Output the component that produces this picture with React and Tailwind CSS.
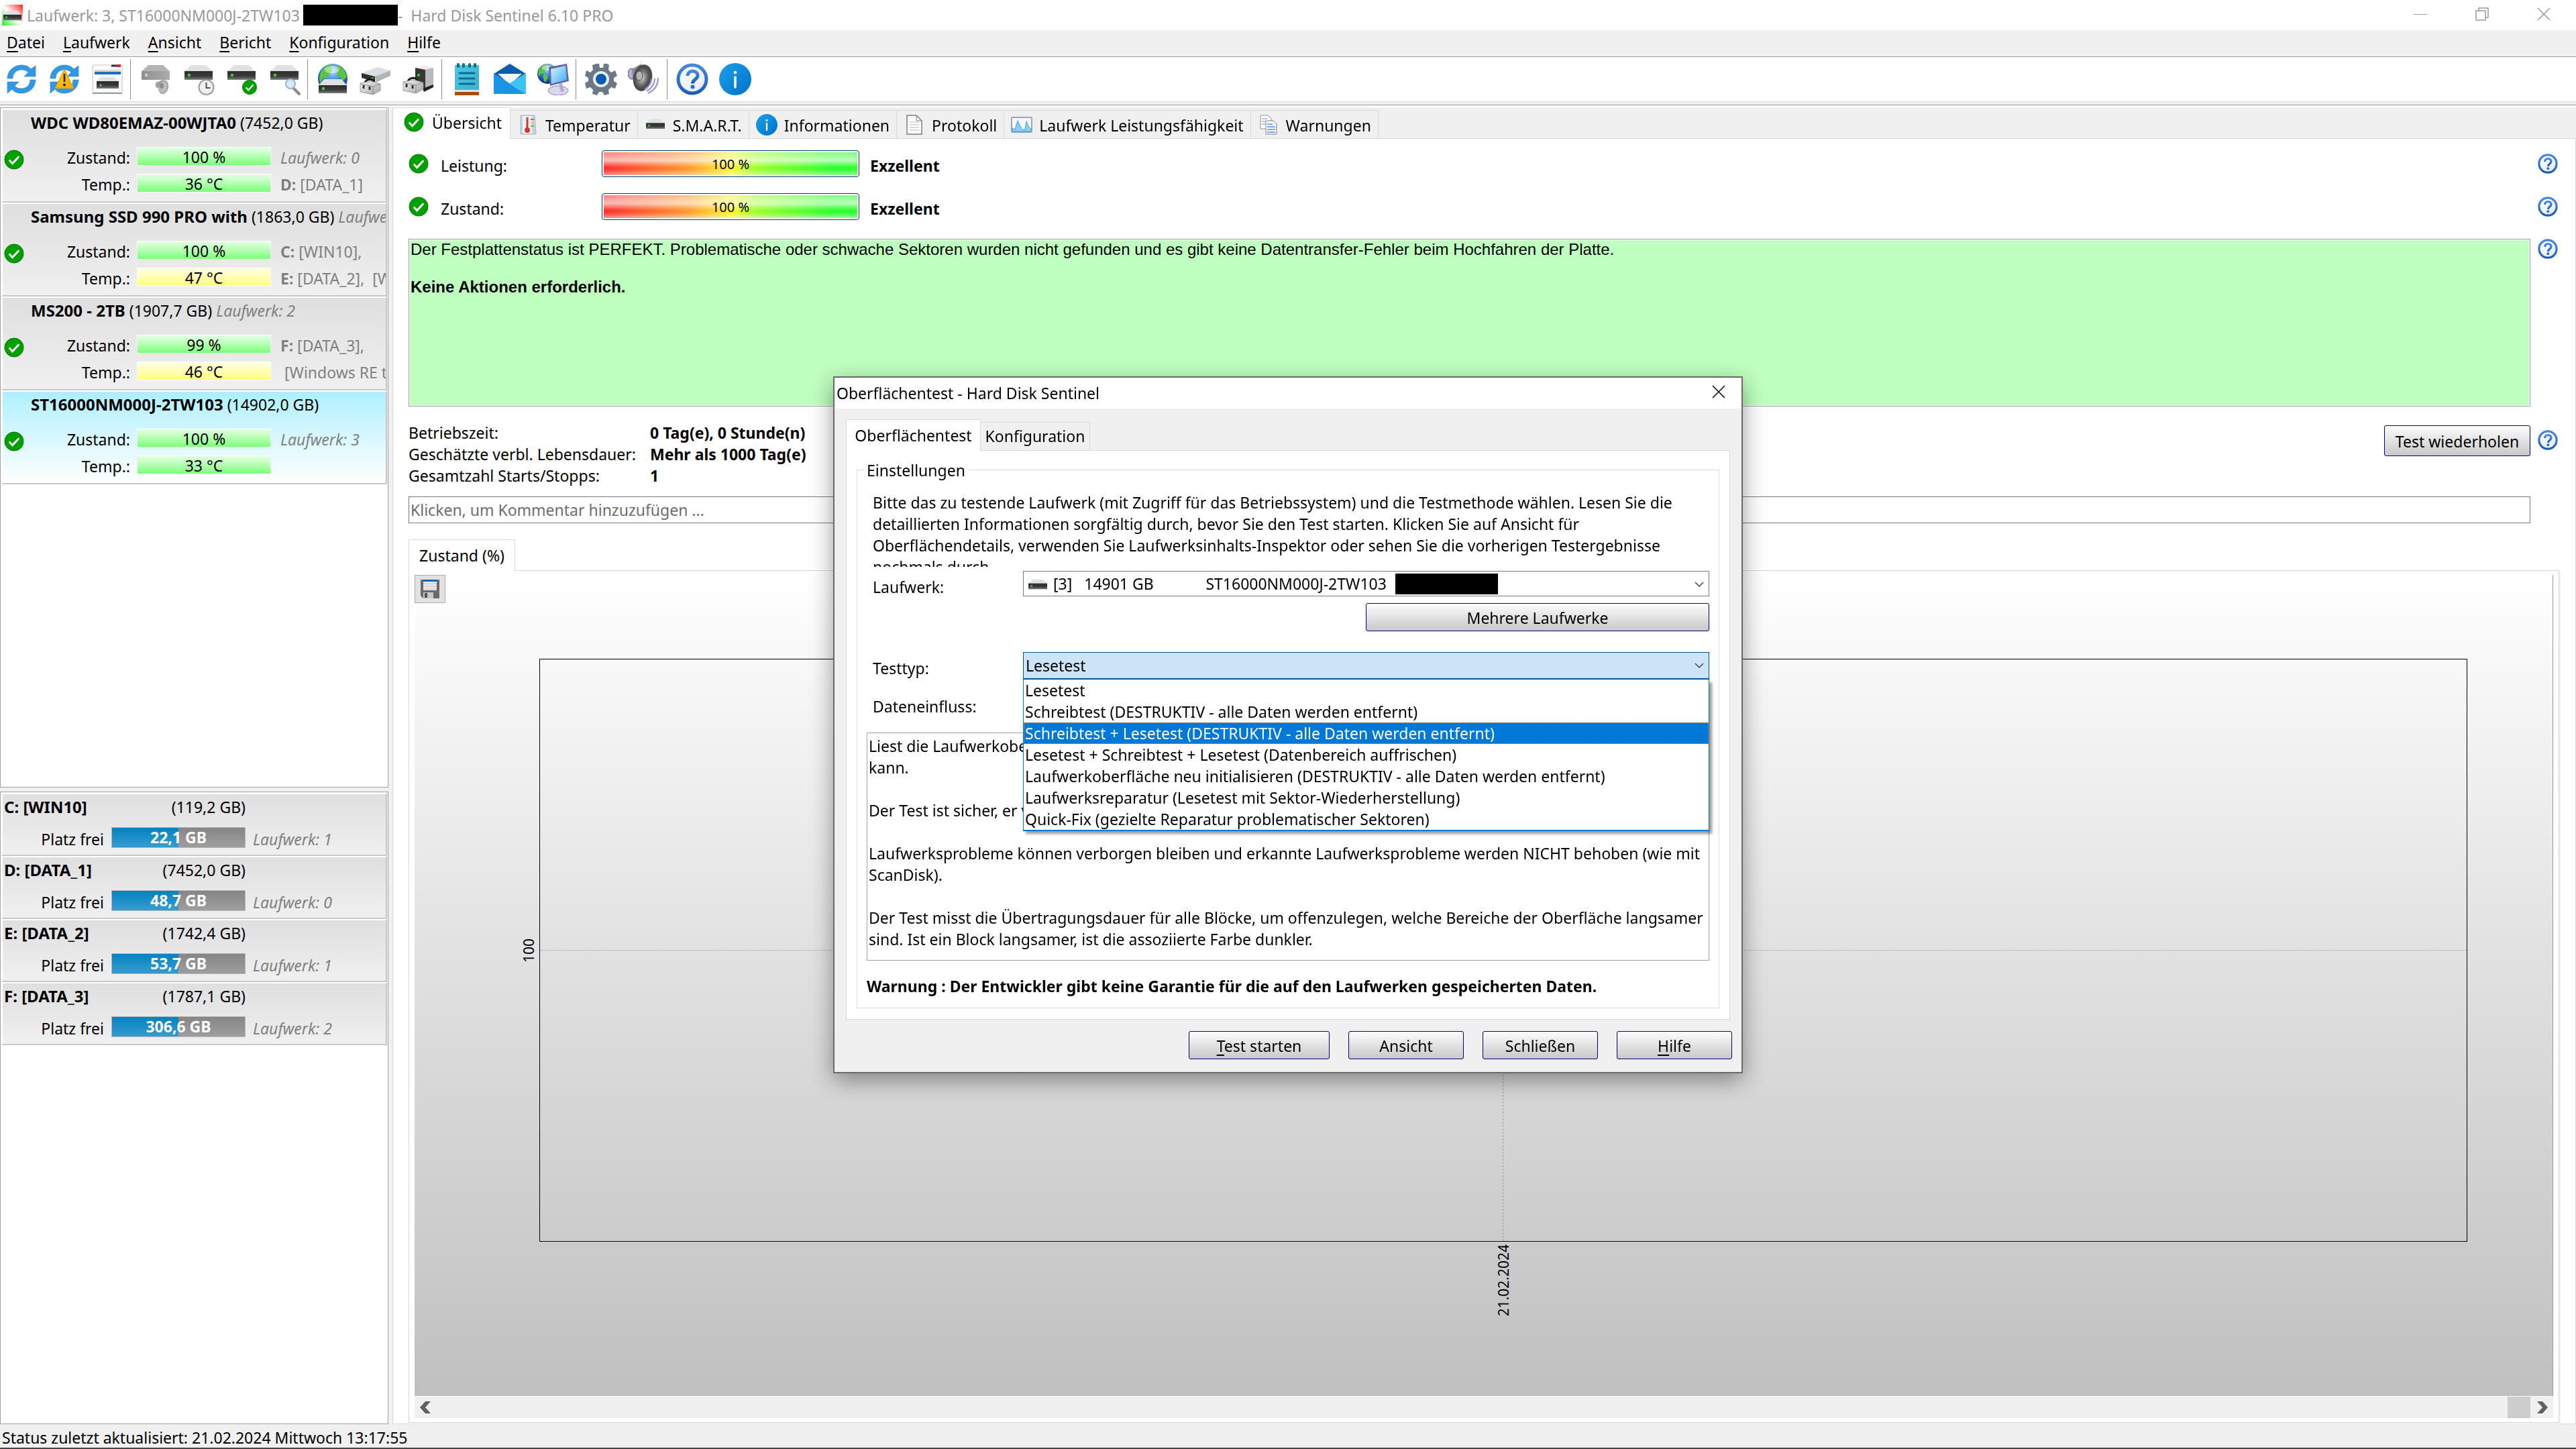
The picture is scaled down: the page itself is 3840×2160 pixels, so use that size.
const disks = [
  {
    name: 'WDC WD80EMAZ-00WJTA0',
    size: '(7452,0 GB)',
    health: '100 %',
    temp: '36 °C',
    line1: <i>Laufwerk: 0</i>,
    line2: <><b>D:</b> [DATA_1]</>,
  },
  {
    name: 'Samsung SSD 990 PRO with',
    size: '(1863,0 GB)',
    extra: 'Laufwerk: 1',
    health: '100 %',
    temp: '47 °C',
    warm: true,
    line1: <><b>C:</b> [WIN10],</>,
    line2: <><b>E:</b> [DATA_2], &nbsp;[Windows RE tools]</>,
  },
  {
    name: 'MS200 - 2TB',
    size: '(1907,7 GB)',
    extra: 'Laufwerk: 2',
    health: '99 %',
    temp: '46 °C',
    warm: true,
    line1: <><b>F:</b> [DATA_3],</>,
    line2: <>&nbsp;[Windows RE tools]</>,
  },
  {
    name: 'ST16000NM000J-2TW103',
    size: '(14902,0 GB)',
    health: '100 %',
    temp: '33 °C',
    selected: true,
    line1: <i>Laufwerk: 3</i>,
  },
];

const volumes = [
  { name: 'C: [WIN10]', size: '(119,2 GB)', free: '22,1 GB', disk: 'Laufwerk: 1' },
  { name: 'D: [DATA_1]', size: '(7452,0 GB)', free: '48,7 GB', disk: 'Laufwerk: 0' },
  { name: 'E: [DATA_2]', size: '(1742,4 GB)', free: '53,7 GB', disk: 'Laufwerk: 1' },
  { name: 'F: [DATA_3]', size: '(1787,1 GB)', free: '306,6 GB', disk: 'Laufwerk: 2' },
];

const menu = ['Datei', 'Laufwerk', 'Ansicht', 'Bericht', 'Konfiguration', 'Hilfe'];

const testTypes = [
  'Lesetest',
  'Schreibtest (DESTRUKTIV - alle Daten werden entfernt)',
  'Schreibtest + Lesetest (DESTRUKTIV - alle Daten werden entfernt)',
  'Lesetest + Schreibtest + Lesetest (Datenbereich auffrischen)',
  'Laufwerkoberfläche neu initialisieren (DESTRUKTIV - alle Daten werden entfernt)',
  'Laufwerksreparatur (Lesetest mit Sektor-Wiederherstellung)',
  'Quick-Fix (gezielte Reparatur problematischer Sektoren)',
];

const testInfo = `Liest die Laufwerkoberfläche und ermittelt, ob jeder Sektor gelesen werden
kann.

Der Test ist sicher, er verändert keine Daten.

Laufwerksprobleme können verborgen bleiben und erkannte Laufwerksprobleme werden NICHT behoben (wie mit
ScanDisk).

Der Test misst die Übertragungsdauer für alle Blöcke, um offenzulegen, welche Bereiche der Oberfläche langsamer
sind. Ist ein Block langsamer, ist die assoziierte Farbe dunkler.`;

/* ---------- Icons ---------- */

function Icon({ className = 'size-12', box = '0 0 48 48', children }) {
  return (
    <svg viewBox={box} className={`${className} shrink-0`} aria-hidden="true">
      {children}
    </svg>
  );
}

// Gradients shared by all icons
function Defs() {
  return (
    <svg className="absolute size-0" aria-hidden="true">
      <defs>
        <linearGradient id="dark" x1="0" y1="0" x2="0" y2="1">
          <stop offset="0" stopColor="#2c2c2c" />
          <stop offset="0.6" stopColor="#3c3c3c" />
          <stop offset="1" stopColor="#808080" />
        </linearGradient>
        <linearGradient id="metal" x1="0" y1="0" x2="1" y2="1">
          <stop offset="0" stopColor="#f4f4f6" />
          <stop offset="1" stopColor="#a4a4a8" />
        </linearGradient>
        <linearGradient id="grey" x1="0" y1="0" x2="1" y2="0">
          <stop offset="0" stopColor="#8f8f8f" />
          <stop offset="1" stopColor="#acacac" />
        </linearGradient>
        <linearGradient id="blue" x1="0" y1="0" x2="1" y2="1">
          <stop offset="0" stopColor="#1ea0e6" />
          <stop offset="1" stopColor="#0070cc" />
        </linearGradient>
        <linearGradient id="ring" x1="0" y1="0" x2="0" y2="1">
          <stop offset="0" stopColor="#4488e4" />
          <stop offset="1" stopColor="#1e5cbc" />
        </linearGradient>
        <linearGradient id="face" x1="0" y1="0" x2="1" y2="1">
          <stop offset="0" stopColor="#ffffff" />
          <stop offset="1" stopColor="#dfe9f7" />
        </linearGradient>
        <linearGradient id="warn" x1="0" y1="0" x2="1" y2="1">
          <stop offset="0" stopColor="#ffd21a" />
          <stop offset="1" stopColor="#f9a800" />
        </linearGradient>
        <linearGradient id="screen" x1="0" y1="0" x2="1" y2="1">
          <stop offset="0" stopColor="#d8f6ff" />
          <stop offset="1" stopColor="#3aa8f0" />
        </linearGradient>
        <linearGradient id="note" x1="0" y1="0" x2="1" y2="1">
          <stop offset="0" stopColor="#4fc4e0" />
          <stop offset="1" stopColor="#3fb0d0" />
        </linearGradient>
        <radialGradient id="sea" cx="0.5" cy="0.25" r="0.8">
          <stop offset="0" stopColor="#a8dcff" />
          <stop offset="0.5" stopColor="#2c78d8" />
          <stop offset="1" stopColor="#0a1a70" />
        </radialGradient>
        <radialGradient id="cone">
          <stop offset="0" stopColor="#d8d8d8" />
          <stop offset="0.6" stopColor="#7a7a7a" />
          <stop offset="1" stopColor="#4a4a4a" />
        </radialGradient>
        <linearGradient id="corners" x1="1" y1="0" x2="0" y2="1">
          <stop offset="0" stopColor="#ff2020" />
          <stop offset="0.5" stopColor="#ffffff" />
          <stop offset="1" stopColor="#20f020" />
        </linearGradient>
      </defs>
    </svg>
  );
}

function Hdd({ muted }) {
  return (
    <g>
      <path d="M13 3h22l10 9.500H3z" fill={muted ? '#b4b4b4' : '#dfe0e4'} />
      <rect x="3" y="12" width="42" height="13" fill={muted ? 'url(#grey)' : 'url(#dark)'} />
      <circle cx="10" cy="18" r="2.200" fill={muted ? '#cfcfcf' : '#2be02b'} />
    </g>
  );
}

function Arrows() {
  return (
    <g fill="#3397e8" stroke="#2a80c8" strokeWidth="0.600">
      <path d="M3 23C3 12 12 3 24 3c6 0 11 2 14 6l7-5v16H28l6-6c-3-3-6-4-10-4-7 0-13 5-13 13z" />
      <path d="M45 25c0 11-9 20-21 20-6 0-11-2-14-6l-7 6V28h17l-6 6c3 3 6 4 10 4 7 0 13-5 13-13z" />
    </g>
  );
}

function Globe({ cx, cy, r }) {
  return (
    <g transform={`translate(${cx - r} ${cy - r}) scale(${r / 20})`}>
      <circle cx="20" cy="20" r="20" fill="url(#sea)" />
      <path d="M6 8c4-5 9-7 13-7l-2 5 3 3-5 5-3 5-5 1-4 6c-2-6-1-12 3-18zM12 20l8 3 1 5-5 9c-4-3-5-11-4-17zM27 2c6 3 11 9 12 16l-5 5-4-5-5-2 2-6-2-4z" fill="#5bc43c" />
      <ellipse cx="19" cy="8" rx="10" ry="5" fill="#fff" opacity="0.450" />
    </g>
  );
}

function Check({ className = 'size-[30px]' }) {
  return (
    <Icon className={className} box="0 0 30 30">
      <CheckDot cx={15} cy={15} r={14.5} />
    </Icon>
  );
}

function CheckDot({ cx, cy, r }) {
  return (
    <g transform={`translate(${cx} ${cy}) scale(${r / 15})`}>
      <circle r="14.500" fill="#00a000" stroke="#0a6e0a" />
      <path d="M-7.500 0.500l5 5.500L7.500-5" fill="none" stroke="#fff" strokeWidth="3" />
    </g>
  );
}

function Help({ className = 'size-[30px]' }) {
  return (
    <Icon className={className}>
      <circle cx="24" cy="24" r="21" fill="url(#face)" stroke="url(#ring)" strokeWidth="5" />
      <path d="M17 19c0-4 3-7 7.500-7s7.500 3 7.500 6.500c0 6-7.500 5.500-7.500 12" fill="none" stroke="url(#ring)" strokeWidth="5" />
      <circle cx="24.500" cy="35.500" r="3" fill="#2a68c8" />
    </Icon>
  );
}

function Info({ className = 'size-12' }) {
  return (
    <Icon className={className}>
      <circle cx="24" cy="24" r="24" fill="url(#blue)" />
      <path d="M24 21v15" stroke="#fff" strokeWidth="3.500" strokeLinecap="round" />
      <circle cx="24" cy="14" r="2.300" fill="#fff" />
    </Icon>
  );
}

function Toolbox({ y = 28 }) {
  return (
    <g transform={`translate(0 ${y - 28})`}>
      <path d="M8 30c0-6 12-8 14-2" fill="none" stroke="#1c1c1c" strokeWidth="3" />
      <path d="M1 30l16-3 14 4v10l-11 6-19-4z" fill="url(#metal)" stroke="#8c8c8c" strokeWidth="0.800" />
      <path d="M1 31l19 4 11-4M20 35v12" fill="none" stroke="#8c8c8c" />
      <path d="M6 33v5M15 35v5" stroke="#2a2a2a" strokeWidth="2.800" />
    </g>
  );
}

function Speaker({ muted }) {
  return (
    <g>
      <ellipse cx="6" cy="16" rx="6" ry="8" fill={muted ? '#a8a8a8' : '#b4b0d8'} stroke={muted ? '#8c8c8c' : '#4c4488'} />
      <path d="M6 9l14-8v42L7 24z" fill={muted ? '#9a9a9a' : '#8a8a90'} />
      <ellipse cx="22" cy="22" rx="14" ry="20" fill={muted ? '#a4a4a4' : '#4c4c4c'} transform="rotate(12 22 22)" />
      <ellipse cx="21" cy="22" rx="11" ry="16" fill={muted ? '#bdbdbd' : 'url(#cone)'} transform="rotate(12 21 22)" />
      <ellipse cx="17" cy="19" rx="5" ry="7" fill={muted ? '#8c8c8c' : '#b4b4b4'} stroke={muted ? '#808080' : '#505050'} />
      {!muted && (
        <path d="M35 24c0 6-4 12-10 15M40 23c0 9-5 15-12 19M45 22c0 11-6 19-15 23" fill="none" stroke="#9a96d4" strokeWidth="2.200" />
      )}
    </g>
  );
}

const toolbar = [
  [
    ['Aktualisieren', <Icon><Arrows /></Icon>],
    [
      'Warnung aktualisieren',
      <Icon>
        <Arrows />
        <path d="M24 10l13 27H11z" fill="url(#warn)" stroke="#f0a800" strokeWidth="2" strokeLinejoin="round" />
        <path d="M24 16v12" stroke="#222" strokeWidth="2.600" />
        <circle cx="24" cy="32.500" r="2" fill="#222" />
      </Icon>,
    ],
    [
      'Fenster',
      <Icon>
        <rect x="2" y="3" width="44" height="41" rx="1" fill="#fafafa" stroke="#c4c4c4" />
        <path d="M2 45h44" stroke="#9a9a9a" strokeWidth="2" />
        <path d="M30 4h10" stroke="#333" strokeWidth="3" />
        <path d="M38 4h6" stroke="#d82a3a" strokeWidth="4" />
        <rect x="5" y="10" width="39" height="4" fill="#e2d6cc" />
        <rect x="5" y="13" width="39" height="4" fill="#1a70c8" />
        <path d="M14 21h20l6 6H8z" fill="#dfe0e4" />
        <rect x="8" y="27" width="33" height="11" fill="url(#dark)" />
        <circle cx="14" cy="33" r="1.800" fill="#2be02b" />
      </Icon>,
    ],
  ],
  [
    [
      'Akustik',
      <Icon>
        <Hdd muted />
        <g transform="translate(24 24) scale(0.530)"><Speaker muted /></g>
      </Icon>,
    ],
    [
      'Kurztest',
      <Icon>
        <Hdd />
        <circle cx="35.500" cy="36" r="11" fill="#f0f0f0" stroke="#9c9c9c" strokeWidth="2" />
        <path d="M35.500 29v8h6" fill="none" stroke="#555" strokeWidth="2" />
      </Icon>,
    ],
    ['Erweiterter Test', <Icon><Hdd /><CheckDot cx={36} cy={36} r={11} /></Icon>],
    [
      'Oberflächentest',
      <Icon>
        <Hdd />
        <path d="M38 38l8 8" stroke="#8a8a8a" strokeWidth="4" strokeLinecap="round" />
        <circle cx="33" cy="31" r="7" fill="#d6ecfc" stroke="#98b4d4" strokeWidth="2" />
      </Icon>,
    ],
  ],
  [
    [
      'Netzwerk',
      <Icon>
        <Globe cx={24} cy={23} r={22} />
        <path d="M11 24h26l8 9H3z" fill="#dfe0e4" />
        <rect x="3" y="33" width="42" height="12" fill="url(#dark)" />
        <circle cx="10" cy="38" r="2.200" fill="#2be02b" />
      </Icon>,
    ],
    [
      'Laufwerk Werkzeug',
      <Icon>
        <path d="M3 15L27 6l19 5-23 10z" fill="#dedee2" />
        <path d="M23 20l23-9v8l-22 10z" fill="#b4b4b8" />
        <path d="M3 15l20 5v8L3 22z" fill="#303030" />
        <circle cx="19" cy="23" r="1.800" fill="#2be02b" />
        <Toolbox />
      </Icon>,
    ],
    [
      'Rechner Werkzeug',
      <Icon>
        <path d="M19 7L33 3l13 4-11 4z" fill="#ececf0" />
        <path d="M34 10l12-3v28l-12 5z" fill="#b8b8bc" />
        <path d="M19 7l15 3v30l-15-6z" fill="#363636" />
        <path d="M30 38l16-6v4L32 43z" fill="#222" />
        <circle cx="24" cy="18" r="2" fill="#2be02b" />
        <Toolbox y={26} />
      </Icon>,
    ],
  ],
  [
    [
      'Bericht',
      <Icon>
        <rect x="6" y="3" width="36" height="38" fill="url(#note)" />
        <rect x="6" y="40" width="36" height="4" fill="#e6e2e0" />
        <rect x="6" y="43" width="36" height="5" fill="#a44c08" />
        <path d="M11 2v3M19 2v3M28 2v3M36 2v3" stroke="#0c6a8c" strokeWidth="4" strokeLinecap="round" />
        <path d="M13 15h22M13 23h22M13 31h22" stroke="#0a6e92" strokeWidth="3" strokeLinecap="round" />
      </Icon>,
    ],
    [
      'E-Mail',
      <Icon>
        <path d="M0 16L24 1l24 15-24 14z" fill="#0c5cac" />
        <path d="M6 16h36L24 32z" fill="#f2f2f2" />
        <path d="M0 15l48 31H0z" fill="#1c94e4" />
        <path d="M48 15v31L24 30z" fill="#38c4f4" />
      </Icon>,
    ],
    [
      'Fernzugriff',
      <Icon>
        <Globe cx={16} cy={16} r={15} />
        <path d="M18 6l27-5 3 26-28 7z" fill="#6a62a8" />
        <path d="M21 9l22-5 2 21-23 6z" fill="url(#screen)" />
        <ellipse cx="32" cy="41" rx="15" ry="7" fill="#d8d8ec" stroke="#8a82bc" />
        <path d="M33 31l5-1 3 12-5 1z" fill="#b0aad8" />
      </Icon>,
    ],
  ],
  [
    [
      'Einstellungen',
      <Icon>
        <path
          d="M17 1h4l1 6h5l1-6h5l3 2-1 7 4 4 6-3 3 8-5 3v5l5 3-3 8-6-2-4 4 1 6-7 2-3-5h-5l-3 5-7-2 1-6-4-4-6 2-2-8 5-3v-5l-5-3 2-8 6 3 4-4-1-7z"
          fill="#6c7884"
        />
        <circle cx="24" cy="24" r="12" fill="#e8ecf0" />
        <circle cx="24" cy="24" r="8" fill="#0a5cac" />
      </Icon>,
    ],
    ['Akustische Warnung', <Icon><Speaker /></Icon>],
  ],
  [
    ['Hilfe', <Help className="size-12" />],
    ['Info', <Info />],
  ],
];

const tabs = [
  [
    'Temperatur',
    <Icon className="size-8" box="0 0 32 32">
      <path d="M5 2h21l2 28H5z" fill="#c4d4e4" stroke="#a4b4c8" />
      <path d="M8 3h14v26H8z" fill="#e8f0f8" />
      <path d="M15 5v18" stroke="#d8342c" strokeWidth="3" />
      <circle cx="15" cy="24" r="4" fill="#d8342c" />
      <path d="M20 8h5" stroke="#e05050" strokeWidth="2" />
      <path d="M20 13h5" stroke="#e8c840" strokeWidth="2" />
      <path d="M20 18h5" stroke="#60b850" strokeWidth="2" />
    </Icon>,
  ],
  [
    'S.M.A.R.T.',
    <Icon className="size-8" box="0 -8 48 48">
      <Hdd />
    </Icon>,
  ],
  ['Informationen', <Info className="size-8" />],
  [
    'Protokoll',
    <Icon className="size-8" box="0 0 32 32">
      <path d="M5 2h14l8 8v20H5z" fill="#fff" stroke="#7c7c7c" strokeWidth="1.500" />
      <path d="M19 2v8h8" fill="none" stroke="#7c7c7c" />
      <path d="M9 12h14M9 16h14M9 20h14M9 24h14" stroke="#b8b8b8" />
    </Icon>,
  ],
  [
    'Laufwerk Leistungsfähigkeit',
    <Icon className="size-8" box="0 0 32 32">
      <rect x="1" y="5" width="30" height="22" rx="1" fill="#f4faff" stroke="#9aa8b4" strokeWidth="2" />
      <path d="M2 21l4 2 4-13 4 9 4 5 3-1 2-12 3 8 4 3v4H2z" fill="#8cd0fa" stroke="#3c9ce0" />
    </Icon>,
  ],
  [
    'Warnungen',
    <Icon className="size-8" box="0 0 32 32">
      <path d="M4 2h11l5 5v15H4z" fill="#fff" stroke="#909090" />
      <path d="M6 7h8M6 11h11M6 15h11" stroke="#90b8f0" strokeWidth="1.500" />
      <path d="M12 10h11l5 5v15H12z" fill="#fff" stroke="#808080" />
      <path d="M14 15h8M14 19h12M14 23h12M14 27h12" stroke="#4c88e8" strokeWidth="1.500" />
    </Icon>,
  ],
];

/* ---------- Small parts ---------- */

function PushButton({ className = '', children }) {
  return (
    <button
      className={`flex items-center justify-center rounded-[3px] border border-[#000080] bg-gradient-to-b from-[#fdfdfd] to-[#c8c8c8] pt-0.5 ${className}`}
    >
      {children}
    </button>
  );
}

function Hot({ children }) {
  return (
    <span>
      <u className="underline-offset-4">{children[0]}</u>
      {children.slice(1)}
    </span>
  );
}

function Meter({ children, warm }) {
  return (
    <div
      className={`h-[28px] w-[200px] border border-white bg-gradient-to-b text-center leading-7 ${
        warm ? 'from-[#ffffe4] to-[#ffff78]' : 'from-[#e4ffe4] to-[#78ff78]'
      }`}
    >
      {children}
    </div>
  );
}

function DiskItem({ disk }) {
  return (
    <li
      className={`h-[140px] overflow-hidden border-2 border-t-white border-l-white border-r-[#c8c8c8] border-b-[#c8c8c8] bg-gradient-to-b pt-[3px] whitespace-nowrap ${
        disk.selected ? 'from-[#aeefff] to-white' : 'from-[#dfdfdf] to-[#f0f0f0]'
      }`}
    >
      <div className="pl-[42px]">
        <b className="text-[24px]">{disk.name}</b> {disk.size} <i className="text-[#808080]">{disk.extra}</i>
      </div>
      <div className="mt-5 flex">
        <div className="w-10 shrink-0 pt-1 pl-0.5">
          <Check />
        </div>
        <div className="grid shrink-0 grid-cols-[150px_200px_1fr] gap-x-2.5 text-[#808080]">
          <span className="text-right text-black">Zustand:</span>
          <span className="text-black"><Meter>{disk.health}</Meter></span>
          <span className="pl-1">{disk.line1}</span>
          <span className="mt-2 text-right text-black">Temp.:</span>
          <span className="mt-2 text-black"><Meter warm={disk.warm}>{disk.temp}</Meter></span>
          <span className="mt-2 pl-1">{disk.line2}</span>
        </div>
      </div>
    </li>
  );
}

function VolumeItem({ volume }) {
  return (
    <li className="h-[94px] border-2 border-t-white border-l-white border-r-[#c8c8c8] border-b-[#c8c8c8] bg-gradient-to-b from-[#dfdfdf] to-[#f0f0f0] pt-[3px] pl-0.5">
      <div className="flex w-[360px] justify-between">
        <b className="text-[24px]">{volume.name}</b>
        <span>{volume.size}</span>
      </div>
      <div className="mt-3.5 flex gap-[11px]">
        <span className="mt-0.5 w-[149px] text-right">Platz frei</span>
        <div className="h-[31px] w-[200px] border border-[#b4b4b4] bg-[linear-gradient(#fff0,#fff3),linear-gradient(to_right,#0583c2_50%,#868686_50%)] text-center leading-7 font-bold text-white">
          {volume.free}
        </div>
        <i className="mt-0.5 text-[#808080]">{volume.disk}</i>
      </div>
    </li>
  );
}

function RatingRow({ label }) {
  return (
    <div className="flex h-16 items-center pr-[26px]">
      <Check />
      <span className="mt-1.5 w-[258px] pl-[18px]">{label}</span>
      <div className="h-10 w-[384px] rounded-[4px] border border-[#003c74] bg-white p-0.5">
        <div className="h-full bg-[linear-gradient(#fff6,#fffa_35%,#fff0_65%,#fff0_75%,#fff7),linear-gradient(to_right,#ff3030,#ff9a30_33%,#fff530_50%,#a0ff30_60%,#30ff30_90%)] text-center text-[20px] leading-9">
          100 %
        </div>
      </div>
      <b className="mt-1.5 flex-1 pl-4">Exzellent</b>
      <Help />
    </div>
  );
}

/* ---------- Dialog ---------- */

function SurfaceTestDialog() {
  return (
    <div className="pointer-events-none fixed inset-0 flex items-center justify-center">
      <section
        role="dialog"
        aria-label="Oberflächentest - Hard Disk Sentinel"
        className="pointer-events-auto w-[1356px] border-2 border-[#6a6a6a] bg-[#f0f0f0] shadow-[0_10px_32px_rgba(0,0,0,0.4)]"
      >
        <header className="flex h-[46px] items-center justify-between bg-white pr-6 pl-[3px]">
          <span>Oberflächentest - Hard Disk Sentinel</span>
          <button aria-label="Schließen" className="mb-1">
            <Icon className="size-5" box="0 0 20 20">
              <path d="M1 1l18 18M19 1L1 19" stroke="#000" strokeWidth="1.500" />
            </Icon>
          </button>
        </header>

        <div className="px-[17px] pt-4">
          <div className="relative z-10 -mb-px flex h-[47px] items-end">
            <button className="h-full w-[201px] border border-b-0 border-[#d9d9d9] bg-white">Oberflächentest</button>
            <button className="h-[43px] w-[163px] border border-l-0 border-[#d9d9d9]">Konfiguration</button>
          </div>

          <div className="border border-[#d9d9d9] bg-white px-[15px] pt-[13px] pb-4">
            <fieldset className="border border-[#dcdcdc] px-3.5 pb-4">
              <legend className="-ml-1 px-1">Einstellungen</legend>
              <p className="mt-4 h-[112px] overflow-hidden pl-[9px] whitespace-nowrap">
                Bitte das zu testende Laufwerk (mit Zugriff für das Betriebssystem) und die Testmethode wählen. Lesen Sie die
                <br />
                detaillierten Informationen sorgfältig durch, bevor Sie den Test starten. Klicken Sie auf Ansicht für
                <br />
                Oberflächendetails, verwenden Sie Laufwerksinhalts-Inspektor oder sehen Sie die vorherigen Testergebnisse
                <br />
                nochmals durch.
              </p>

              <div className="mt-1.5 flex">
                <label htmlFor="drive" className="w-[233px] pt-2 pl-[9px]">Laufwerk:</label>
                <div className="relative flex-1">
                  <select id="drive" className="h-[38px] w-full appearance-none border border-[#7a7a7a] bg-white pl-11">
                    <option>{'[3]\u00a0\u00a0\u00a014901 GB\u00a0\u00a0\u00a0\u00a0\u00a0\u00a0\u00a0\u00a0\u00a0\u00a0\u00a0\u00a0\u00a0ST16000NM000J-2TW103'}</option>
                  </select>
                  <Icon className="absolute top-1 left-1.5 size-8" box="0 -10 48 48">
                    <Hdd />
                  </Icon>
                  <span className="absolute top-1 left-[555px] h-[31px] w-[153px] bg-black" />
                  <Chevron />
                </div>
              </div>

              <div className="mt-2 flex justify-end">
                <PushButton className="h-[42px] w-[512px]">Mehrere Laufwerke</PushButton>
              </div>

              <div className="mt-[31px] flex">
                <label htmlFor="testtype" className="w-[233px] pt-2 pl-[9px]">Testtyp:</label>
                <div className="relative flex-1">
                  <select id="testtype" className="h-[41px] w-full appearance-none border border-b-2 border-[#005499] bg-[#cce4f7] pl-[3px]">
                    {testTypes.map((type) => (
                      <option key={type}>{type}</option>
                    ))}
                  </select>
                  <Chevron />
                  <ul
                    role="listbox"
                    aria-label="Testtyp"
                    className="absolute top-full left-0 z-20 w-full border border-t-0 border-b-2 border-[#0078d7] bg-white shadow-[4px_4px_4px_rgba(0,0,0,0.4)]"
                  >
                    {testTypes.map((type, i) => (
                      <li
                        key={type}
                        role="option"
                        aria-selected={i === 2}
                        className={i === 2 ? 'bg-[#0078d7] pl-0.5 text-white outline-1 -outline-offset-1 outline-dotted outline-[#ff8728]' : 'pl-0.5'}
                      >
                        {type}
                      </li>
                    ))}
                  </ul>
                </div>
              </div>

              <div className="mt-6 pl-[9px]">Dateneinfluss:</div>
              <textarea
                readOnly
                aria-label="Beschreibung"
                value={testInfo}
                className="mt-[23px] block h-[340px] w-full resize-none overflow-hidden border border-[#a0a0a0] bg-white px-0.5 pt-[3px] whitespace-pre"
              />
              <b className="mt-[22px] block whitespace-nowrap">
                Warnung : Der Entwickler gibt keine Garantie für die auf den Laufwerken gespeicherten Daten.
              </b>
            </fieldset>
          </div>
        </div>

        <footer className="flex justify-end gap-7 pt-[17px] pr-[14px] pb-[19px]">
          <PushButton className="h-[42px] w-[210px]"><Hot>Test starten</Hot></PushButton>
          <PushButton className="h-[42px] w-[172px]">Ansicht</PushButton>
          <PushButton className="h-[42px] w-[172px]">Schließen</PushButton>
          <PushButton className="h-[42px] w-[172px]"><Hot>Hilfe</Hot></PushButton>
        </footer>
      </section>
    </div>
  );
}

function Chevron() {
  return (
    <Icon className="pointer-events-none absolute top-4 right-2 h-2 w-3.5" box="0 0 14 8">
      <path d="M1 1l6 6 6-6" fill="none" stroke="#444" strokeWidth="1.500" />
    </Icon>
  );
}

/* ---------- Page ---------- */

export default function App() {
  return (
    <div className="flex h-screen flex-col overflow-hidden bg-[#f0f0f0] font-['Noto_Sans',sans-serif] text-[23px] leading-8 text-black">
      <Defs />

      <header className="flex h-[45px] shrink-0 items-center bg-white pr-[38px] pl-[3px] text-[#999]">
        <Icon className="mr-1.5 size-[31px]" box="0 0 48 48">
          <rect width="48" height="48" fill="url(#corners)" />
          <g transform="translate(0 11)"><Hdd /></g>
        </Icon>
        <span className="w-[412px] whitespace-nowrap">Laufwerk: 3, ST16000NM000J-2TW103</span>
        <span className="h-[31px] w-[141px] bg-black" />
        <span className="whitespace-pre">-&nbsp; Hard Disk Sentinel 6.10 PRO</span>
        <div className="mb-1 ml-auto flex gap-[72px]">
          <button aria-label="Minimieren">
            <Icon className="size-5" box="0 0 20 20"><path d="M0 10.500h20" stroke="#999" /></Icon>
          </button>
          <button aria-label="Wiederherstellen">
            <Icon className="size-5" box="0 0 20 20">
              <path d="M1 5h14v14H1zM5 5V1h14v14h-4" fill="none" stroke="#999" strokeWidth="1.500" />
            </Icon>
          </button>
          <button aria-label="Beenden">
            <Icon className="size-5" box="0 0 20 20"><path d="M1 1l18 18M19 1L1 19" stroke="#999" strokeWidth="1.500" /></Icon>
          </button>
        </div>
      </header>

      <nav className="flex h-10 shrink-0 items-center gap-[27px] border-b border-[#a0a0a0] pb-1 pl-2.5">
        {menu.map((item) => (
          <button key={item}><Hot>{item}</Hot></button>
        ))}
      </nav>

      <div className="flex h-[67px] shrink-0 items-center border-b border-[#dcdcdc] bg-white">
        {toolbar.map((group, i) => (
          <div key={i} className="flex items-center">
            {i > 0 && <span className="mr-[5px] ml-0.5 h-[60px] w-px bg-[#8c8c8c]" />}
            {group.map(([label, icon]) => (
              <button key={label} aria-label={label} className="flex w-16 justify-center">{icon}</button>
            ))}
          </div>
        ))}
      </div>
      <div className="mt-1 h-1 shrink-0 border-t border-[#999] bg-white" />

      <div className="flex min-h-0 flex-1">
        <aside className="flex w-[579px] shrink-0 flex-col gap-1.5">
          <ul className="h-[1014px] border border-[#a0a0a8] bg-white p-px">
            {disks.map((disk) => (
              <DiskItem key={disk.name} disk={disk} />
            ))}
          </ul>
          <ul className="flex-1 border border-[#a0a0a8] bg-white p-px">
            {volumes.map((volume) => (
              <VolumeItem key={volume.name} volume={volume} />
            ))}
          </ul>
        </aside>

        <main className="ml-1.5 flex min-w-0 flex-1 flex-col">
          <div className="relative z-10 -mb-px flex h-[47px] items-end">
            <button className="flex h-full items-start gap-3 border border-b-0 border-[#d9d9d9] bg-white pt-1.5 pr-3 pl-4">
              <Check />
              <span>Übersicht</span>
            </button>
            {tabs.map(([label, icon]) => (
              <button key={label} className="flex h-[43px] items-center gap-2.5 border border-l-0 border-[#d9d9d9] px-2.5">
                {icon}
                <span className="pt-0.5">{label}</span>
              </button>
            ))}
          </div>

          <div className="flex flex-1 flex-col border border-[#d9d9d9] bg-white pt-[5px] pl-[23px]">
            <RatingRow label="Leistung:" />
            <RatingRow label="Zustand:" />

            <div className="mt-4 flex gap-[11px] pr-[26px]">
              <div className="h-[250px] flex-1 border border-[#a0a0a8] bg-white p-px">
                <div className="flex h-full flex-col gap-7 bg-[#bfffbf] pl-px font-['Liberation_Sans',Arial,sans-serif] text-[24px] leading-7">
                  <p>
                    Der Festplattenstatus ist PERFEKT. Problematische oder schwache Sektoren wurden nicht gefunden und es gibt
                    keine Datentransfer-Fehler beim Hochfahren der Platte.
                  </p>
                  <p className="font-bold">Keine Aktionen erforderlich.</p>
                </div>
              </div>
              <Help />
            </div>

            <div className="mt-[23px] flex gap-[11px] pr-[26px]">
              <dl className="grid flex-1 grid-cols-[360px_1fr]">
                <dt>Betriebszeit:</dt>
                <dd className="font-bold">0 Tag(e), 0 Stunde(n)</dd>
                <dt>Geschätzte verbl. Lebensdauer:</dt>
                <dd className="font-bold">Mehr als 1000 Tag(e)</dd>
                <dt>Gesamtzahl Starts/Stopps:</dt>
                <dd className="font-bold">1</dd>
              </dl>
              <PushButton className="mt-[5px] h-[46px] w-[218px]">Test wiederholen</PushButton>
              <div className="mt-3"><Help /></div>
            </div>

            <input
              aria-label="Kommentar"
              placeholder="Klicken, um Kommentar hinzuzufügen ..."
              className="mt-[15px] mr-[67px] h-10 border border-[#7a7a7a] bg-white px-0.5 placeholder:text-[#6d6d6d]"
            />

            <div className="relative z-10 mt-6 -mb-px flex">
              <button className="h-[47px] w-[159px] border border-b-0 border-[#d9d9d9] bg-white">Zustand (%)</button>
            </div>
            <div className="mr-6 mb-px flex flex-1 flex-col border border-[#d9d9d9] bg-white px-2 pt-1.5 pb-1.5 shadow-[2px_2px_0_#f0f0f0]">
              <div className="flex flex-1 flex-col border-r border-[#999] bg-gradient-to-b from-white to-[#c0c0c0] pr-[127px]">
                <button aria-label="Speichern" className="flex h-[42px] w-[46px] items-center justify-center border border-[#adadad] bg-[#e1e1e1]">
                  <Icon className="size-7" box="0 0 28 28">
                    <path d="M0 0h28v28H4l-4-4z" fill="#6a6a6a" />
                    <rect x="4" width="20" height="16" fill="#e8e8e8" />
                    <rect x="4" width="20" height="3" fill="#0068c0" />
                    <path d="M4 6h20M4 10h20M4 14h20" stroke="#c4c4c4" />
                    <rect x="4" y="19" width="15" height="9" fill="#c8c8c8" />
                    <rect x="6" y="20" width="4" height="7" fill="#505050" />
                  </Icon>
                </button>
                <div className="mt-[83px] grid flex-1 grid-cols-[186px_1fr] grid-rows-[1fr_230px] text-[21px]">
                  <span className="rotate-180 justify-self-end text-center [writing-mode:vertical-rl]">100</span>
                  <div className="grid grid-cols-2 grid-rows-2 border border-black">
                    <span className="border-r border-b border-dotted border-[#a0a0a0]" />
                    <span className="border-b border-dotted border-[#a0a0a0]" />
                    <span className="border-r border-dashed border-[#a0a0a0]" />
                  </div>
                  <span className="col-start-2 mt-1 rotate-180 place-self-start justify-self-center [writing-mode:vertical-rl]">21.02.2024</span>
                </div>
              </div>
              <div className="mt-px flex h-8 items-center justify-between bg-[#f0f0f0] px-2">
                <Icon className="h-[18px] w-4" box="0 0 16 18"><path d="M16 0H8L0 9l8 9h8L8 9z" fill="#606060" /></Icon>
                <div className="flex h-full items-center gap-2.5">
                  <span className="h-full w-[34px] bg-[#cdcdcd]" />
                  <Icon className="h-[18px] w-4" box="0 0 16 18"><path d="M0 0h8l8 9-8 9H0l8-9z" fill="#606060" /></Icon>
                </div>
              </div>
            </div>
          </div>
        </main>
      </div>

      <footer className="h-[37px] shrink-0 border-b-2 border-[#444] pt-1 pl-[3px]">
        Status zuletzt aktualisiert: 21.02.2024 Mittwoch 13:17:55
      </footer>

      <SurfaceTestDialog />
    </div>
  );
}
